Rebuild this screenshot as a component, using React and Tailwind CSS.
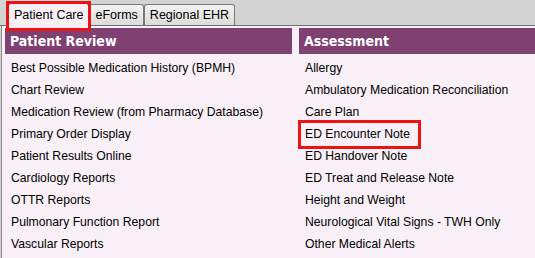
const leftItems = [
  "Best Possible Medication History (BPMH)",
  "Chart Review",
  "Medication Review (from Pharmacy Database)",
  "Primary Order Display",
  "Patient Results Online",
  "Cardiology Reports",
  "OTTR Reports",
  "Pulmonary Function Report",
  "Vascular Reports",
];

const rightItems = [
  "Allergy",
  "Ambulatory Medication Reconciliation",
  "Care Plan",
  "ED Encounter Note",
  "ED Handover Note",
  "ED Treat and Release Note",
  "Height and Weight",
  "Neurological Vital Signs - TWH Only",
  "Other Medical Alerts",
];

const Tab = ({ label, active, marked }) => {
  return (
    <div
      className={
        "relative h-[21px] px-[5px] flex items-center border border-b-0 border-[#7a7a7a] rounded-t-[3px] text-[12.5px] text-black " +
        (active ? "bg-[#f8f0f6] h-[23px] -mb-px z-10" : "bg-gradient-to-b from-[#f2f2f2] to-[#dcdcdc]")
      }
    >
      {label}
      {marked && (
        <span className="absolute -left-[3px] -right-[3px] -top-[3px] -bottom-[5px] border-[3px] border-[#ec1313]"></span>
      )}
    </div>
  );
};

const Column = ({ title, items, width }) => {
  return (
    <div className={width}>
      <div className="h-[26px] bg-[#7f4072] text-white font-bold text-[14px] pl-[5px] flex items-center font-['DejaVu_Sans_Condensed','DejaVu_Sans',sans-serif]">
        {title}
      </div>
      <ul className="pt-[3px]">
        {items.map((item) => (
          <li key={item} className="h-[22px] pl-[6px] flex items-center">
            <span className="relative">
              {item}
              {item === "ED Encounter Note" && (
                <span className="absolute -left-[7px] w-[123px] -top-[5px] -bottom-[6px] border-[3px] border-[#ec1313]"></span>
              )}
            </span>
          </li>
        ))}
      </ul>
    </div>
  );
};

export default function App() {
  return (
    <div className="w-[535px] h-[258px] overflow-hidden bg-[#d3d3d3] flex flex-col font-['Liberation_Sans',Arial,sans-serif] text-[12.2px] text-black">
      <div className="h-[26px] flex items-end pl-[8px] border-b border-[#6e6e6e]">
        <Tab label="Patient Care" active marked />
        <Tab label="eForms" />
        <Tab label="Regional EHR" />
      </div>
      <div className="flex-1 ml-px border-l border-[#8c8c8c] bg-[#f8f0f6] pt-[2px] pl-[3px] flex gap-[7px]">
        <Column title="Patient Review" items={leftItems} width="w-[287px]" />
        <Column title="Assessment" items={rightItems} width="flex-1" />
      </div>
    </div>
  );
}
